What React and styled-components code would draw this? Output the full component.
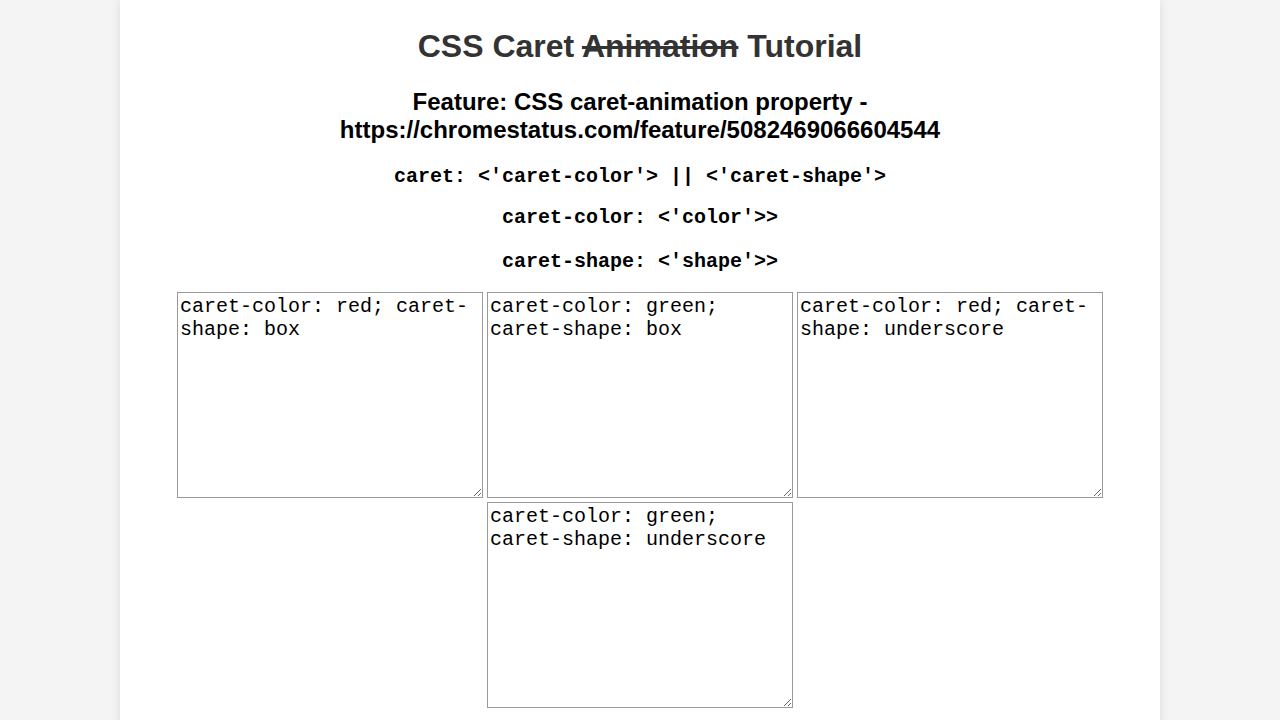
import React from 'react';
import styled, { createGlobalStyle } from 'styled-components';

const GlobalStyle = createGlobalStyle`
  html, body {
    margin: 0;
    padding: 0;
    background-color: #f4f4f4;
    font-family: "Liberation Sans", Arial, sans-serif;
  }
`;

const Page = styled.div`
  max-width: 1000px;
  min-height: 100vh;
  margin: 0 auto;
  padding: 28px 20px 20px;
  background-color: #fff;
  box-shadow: 0 0 10px rgba(0, 0, 0, 0.1);
  text-align: center;
`;

const Title = styled.h1`
  margin: 0;
  font-size: 32px;
  font-weight: bold;
  color: #333;
`;

const Struck = styled.s`
  text-decoration: line-through;
`;

const Feature = styled.h2`
  margin: 23px 0 0;
  font-size: 24px;
  font-weight: bold;
  color: #000;
`;

const Syntax = styled.p`
  margin: ${(props) => props.top}px 0 0;
  font-family: "Liberation Mono", "Courier New", monospace;
  font-size: 20px;
  font-weight: bold;
  color: #000;
  white-space: pre;
`;

const Demos = styled.div`
  display: flex;
  flex-wrap: wrap;
  justify-content: center;
  gap: 4px;
  max-width: 926px;
  margin: 19px auto 0;
`;

const Editor = styled.textarea`
  box-sizing: content-box;
  width: 300px;
  height: 200px;
  margin: 0;
  padding: 2px;
  border: 1px solid #999;
  background: #fff;
  color: #000;
  font-family: "Liberation Mono", "Courier New", monospace;
  font-size: 20px;
  text-align: left;
  caret-color: ${(props) => props.caret};
`;

const demos = [
  { caret: 'red', text: 'caret-color: red; caret-shape: box' },
  { caret: 'green', text: 'caret-color: green; caret-shape: box' },
  { caret: 'red', text: 'caret-color: red; caret-shape: underscore' },
  { caret: 'green', text: 'caret-color: green; caret-shape: underscore' },
];

const App = () => (
  <>
    <GlobalStyle />
    <Page>
      <Title>
        CSS Caret <Struck>Animation</Struck> Tutorial
      </Title>
      <Feature>
        Feature: CSS caret-animation property -
        <br />
        https://chromestatus.com/feature/5082469066604544
      </Feature>
      <Syntax top={21}>caret: &lt;'caret-color'&gt; || &lt;'caret-shape'&gt;</Syntax>
      <Syntax top={18}>caret-color: &lt;'color'&gt;&gt;</Syntax>
      <Syntax top={21}>caret-shape: &lt;'shape'&gt;&gt;</Syntax>
      <Demos>
        {demos.map((d, i) => (
          <Editor key={i} caret={d.caret} defaultValue={d.text} spellCheck={false} />
        ))}
      </Demos>
    </Page>
  </>
);

export default App;
